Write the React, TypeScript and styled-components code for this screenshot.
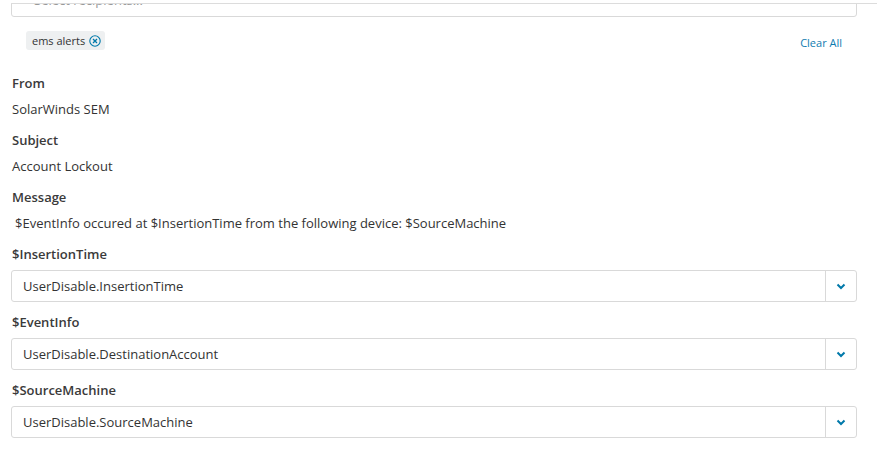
import React from "react";
import styled, { createGlobalStyle } from "styled-components";

const Global = createGlobalStyle`
  html, body { margin: 0; padding: 0; background: #fff; }
  body { font-family: "Open Sans", "Liberation Sans", sans-serif; color: #333; }
  * { box-sizing: border-box; }
`;

const Page = styled.div`
  width: 877px;
  height: 449px;
  overflow: hidden;
  padding: 3px 20px 0 11px;
`;

const Viewport = styled.div`
  margin-right: -20px;
  border-top: 1px solid #dcdcdc;
  overflow: hidden;
  height: 445px;
  padding-right: 20px;
`;

const RecipientsInput = styled.div`
  margin-top: -24px;
  height: 37px;
  border: 1px solid #d9d9d9;
  border-radius: 3px;
  display: flex;
  align-items: center;
  justify-content: space-between;
  padding: 0 24px 0 22px;
  font-size: 13px;
  color: #999;
`;

const Placeholder = styled.span`
  padding-top: 2px;
`;

const MiniChevron = styled.span`
  width: 6px;
  height: 4px;
  margin-top: 26px;
  display: flex;
`;

const ChipRow = styled.div`
  display: flex;
  align-items: center;
  justify-content: space-between;
  margin-top: 14px;
  padding: 0 15px 0 15px;
`;

const Chip = styled.span`
  display: inline-flex;
  align-items: center;
  gap: 4px;
  height: 19px;
  padding: 0 4px 0 6px;
  background: #eef0f1;
  border-radius: 3px;
  font-size: 11px;
  color: #333;
`;

const ChipClose = styled.svg`
  width: 12px;
  height: 12px;
  display: block;
`;

const LinkButton = styled.a`
  font-size: 11px;
  color: #0f7bb0;
  text-decoration: none;
  margin-top: 3px;
  cursor: pointer;
`;

const Fields = styled.div`
  margin-top: 24px;
  display: flex;
  flex-direction: column;
`;

const Field = styled.div<{ $select?: boolean }>`
  display: flex;
  flex-direction: column;
  margin-bottom: ${(p) => (p.$select ? "11px" : "13px")};
`;

const Label = styled.div<{ $tight?: boolean }>`
  font-size: 13px;
  font-weight: 600;
  line-height: 18px;
  color: #3a3a3a;
  padding-left: 1px;
  margin-bottom: ${(p) => (p.$tight ? "7px" : "8px")};
`;

const Value = styled.div<{ $indent?: boolean }>`
  font-size: 13px;
  line-height: 18px;
  color: #333;
  padding-left: ${(p) => (p.$indent ? "4px" : "1px")};
`;

const Select = styled.div`
  height: 32px;
  border: 1px solid #d9d9d9;
  border-radius: 3px;
  display: flex;
  align-items: stretch;
`;

const SelectText = styled.div`
  flex: 1;
  display: flex;
  align-items: center;
  padding-left: 11px;
  font-size: 13px;
  color: #333;
`;

const SelectButton = styled.div`
  width: 31px;
  border-left: 1px solid #d9d9d9;
  display: flex;
  align-items: center;
  justify-content: center;
`;

const Chevron = () => (
  <svg width="10" height="7" viewBox="0 0 10 7">
    <path d="M1.5 1.5 L5 5 L8.5 1.5" fill="none" stroke="#0079aa" strokeWidth="2" />
  </svg>
);

const selects = [
  { label: "$InsertionTime", value: "UserDisable.InsertionTime" },
  { label: "$EventInfo", value: "UserDisable.DestinationAccount" },
  { label: "$SourceMachine", value: "UserDisable.SourceMachine" },
];

export default function App() {
  return (
    <>
      <Global />
      <Page>
        <Viewport>
          <RecipientsInput>
            <Placeholder>Select recipients...</Placeholder>
            <MiniChevron />
          </RecipientsInput>
          <ChipRow>
            <Chip>
              ems alerts
              <ChipClose viewBox="0 0 12 12">
                <circle cx="6" cy="6" r="5.2" fill="none" stroke="#0079aa" strokeWidth="1.1" />
                <path d="M4 4 L8 8 M8 4 L4 8" stroke="#0079aa" strokeWidth="1.3" />
              </ChipClose>
            </Chip>
            <LinkButton>Clear All</LinkButton>
          </ChipRow>
          <Fields>
            <Field>
              <Label>From</Label>
              <Value>SolarWinds SEM</Value>
            </Field>
            <Field>
              <Label>Subject</Label>
              <Value>Account Lockout</Value>
            </Field>
            <Field>
              <Label>Message</Label>
              <Value $indent>$EventInfo occured at $InsertionTime from the following device: $SourceMachine</Value>
            </Field>
            {selects.map((s) => (
              <Field $select key={s.label}>
                <Label $tight>{s.label}</Label>
                <Select>
                  <SelectText>{s.value}</SelectText>
                  <SelectButton>
                    <Chevron />
                  </SelectButton>
                </Select>
              </Field>
            ))}
          </Fields>
        </Viewport>
      </Page>
    </>
  );
}
